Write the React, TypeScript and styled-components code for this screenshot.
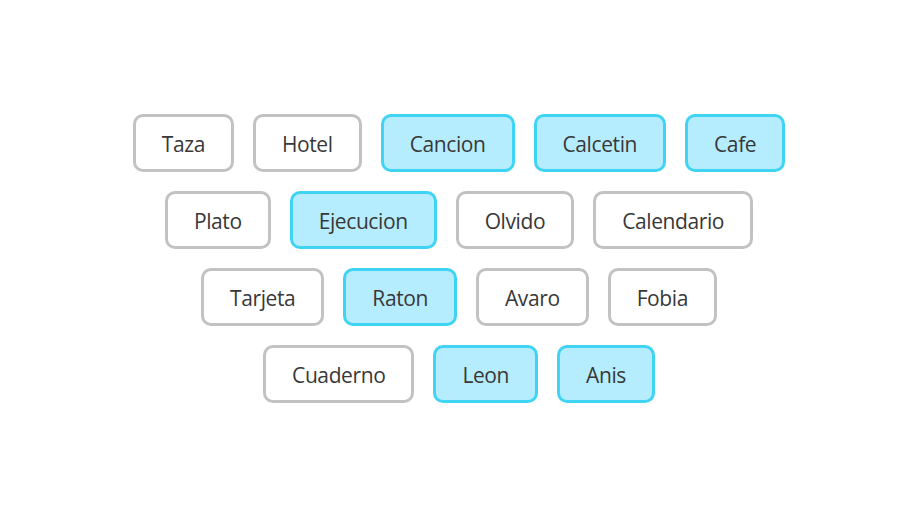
import styled, { createGlobalStyle } from 'styled-components'

const GlobalStyle = createGlobalStyle`
  html, body {
    margin: 0;
    padding: 0;
    background: #ffffff;
  }
  body {
    font-family: 'Open Sans', 'Noto Sans', sans-serif;
  }
`

const Page = styled.div`
  width: 913px;
  height: 505px;
  display: flex;
  align-items: center;
  justify-content: center;
  box-sizing: border-box;
  padding: 12px 0 0 5px;
`

const Board = styled.div`
  display: flex;
  flex-direction: column;
  align-items: center;
  gap: 19px;
`

const Row = styled.div`
  display: flex;
  gap: 19px;
`

const Chip = styled.div<{ $active: boolean }>`
  box-sizing: border-box;
  height: 58px;
  padding: 2px 26px 0;
  display: flex;
  align-items: center;
  justify-content: center;
  border: 3px solid ${({ $active }) => ($active ? '#3fd4f4' : '#c2c2c2')};
  border-radius: 10px;
  background-color: ${({ $active }) => ($active ? '#b6edfe' : '#ffffff')};
  color: #383838;
  font-size: 21px;
  font-weight: 400;
  letter-spacing: -0.4px;
`

const rows: [string, boolean][][] = [
  [
    ['Taza', false],
    ['Hotel', false],
    ['Cancion', true],
    ['Calcetin', true],
    ['Cafe', true],
  ],
  [
    ['Plato', false],
    ['Ejecucion', true],
    ['Olvido', false],
    ['Calendario', false],
  ],
  [
    ['Tarjeta', false],
    ['Raton', true],
    ['Avaro', false],
    ['Fobia', false],
  ],
  [
    ['Cuaderno', false],
    ['Leon', true],
    ['Anis', true],
  ],
]

export default function App() {
  return (
    <>
      <GlobalStyle />
      <Page>
        <Board>
          {rows.map((row, i) => (
            <Row key={i}>
              {row.map(([word, active]) => (
                <Chip key={word} $active={active}>
                  {word}
                </Chip>
              ))}
            </Row>
          ))}
        </Board>
      </Page>
    </>
  )
}
